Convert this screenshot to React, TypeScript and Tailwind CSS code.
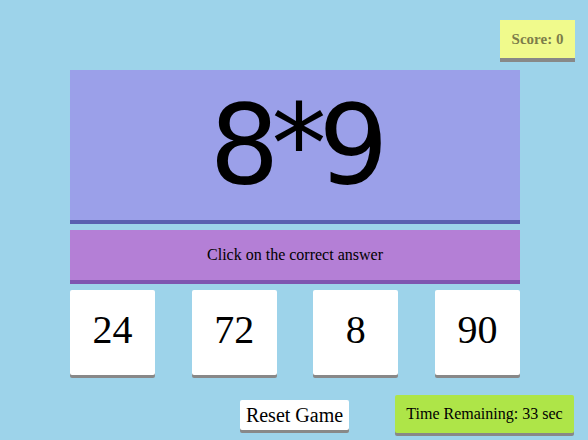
import React from "react";

export default function App() {
  const answers = ["24", "72", "8", "90"];
  return (
    <div className="w-[588px] h-[440px] bg-[#9dd3ea] overflow-hidden flex flex-col pt-[20px] font-['Liberation_Serif',serif]">
      <div className="flex justify-end pr-[13px]">
        <div className="h-[38px] w-[75px] bg-[#f0fa8c] shadow-[0_4px_0_#888888] flex items-center justify-center text-[15px] font-bold text-[#7d7d4a]">
          Score: 0
        </div>
      </div>
      <div className="ml-[70px] w-[450px] mt-[12px] h-[154px] bg-[#9ba0e9] border-b-4 border-[#5a5fb0] flex items-center justify-center">
        <span className="text-[110px] leading-none font-['DejaVu_Sans',sans-serif] tracking-[-8px] text-black">8*9</span>
      </div>
      <div className="ml-[70px] w-[450px] mt-[6px] h-[54px] bg-[#b47fd6] border-b-4 border-[#7f55b0] flex items-center justify-center text-[16px] text-black">
        Click on the correct answer
      </div>
      <div className="ml-[70px] w-[450px] mt-[6px] flex justify-between">
        {answers.map((a) => (
          <div
            key={a}
            className="w-[85px] h-[85px] bg-white rounded-[2px] shadow-[0_3px_0_#888888] flex items-center justify-center text-[40px] text-black pb-[6px]"
          >
            {a}
          </div>
        ))}
      </div>
      <div className="mt-[20px] flex justify-end items-start pr-[14px] gap-[46px]">
        <div className="mt-[5px] h-[30px] w-[109px] bg-white rounded-[2px] shadow-[0_3px_0_#888888] flex items-center justify-center text-[20px] text-black">
          Reset Game
        </div>
        <div className="h-[38px] w-[179px] bg-[#aee548] rounded-[2px] shadow-[0_3px_0_#888888] flex items-center justify-center text-[16px] text-black">
          Time Remaining: 33 sec
        </div>
      </div>
    </div>
  );
}
